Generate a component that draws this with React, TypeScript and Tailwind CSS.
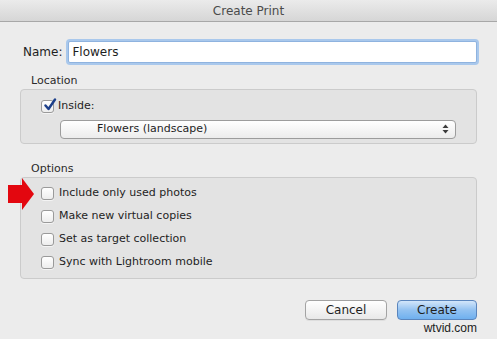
import React from "react";

// Small mac-style checkbox
const Check = ({ checked = false }: { checked?: boolean }) => (
    <span className="relative flex h-[13px] w-[13px] shrink-0 items-center justify-center rounded-[3px] border border-[#9a9a9a] bg-gradient-to-b from-white to-[#ededed] shadow-[0_1px_0_rgba(255,255,255,0.6)]">
        {checked && (
            <svg width="14" height="14" viewBox="0 0 14 14" className="absolute -top-[3px] left-[1px]">
                <path d="M2.5 7.5 L5.5 11 L12 1.5" fill="none" stroke="#1c3f8a" strokeWidth="2.4" strokeLinecap="round" strokeLinejoin="round" />
            </svg>
        )}
    </span>
);

const OptionRow = ({ label }: { label: string }) => (
    <label className="flex h-[23px] items-center gap-[5px]">
        <Check />
        <span>{label}</span>
    </label>
);

const App = () => {
    const options = [
        "Include only used photos",
        "Make new virtual copies",
        "Set as target collection",
        "Sync with Lightroom mobile",
    ];

    return (
        <div
            className="flex h-[339px] w-[497px] flex-col overflow-hidden bg-[#ececec] text-[11px] text-[#1e1e1e]"
            style={{ fontFamily: '"DejaVu Sans", sans-serif' }}
        >
            {/* Title bar */}
            <div className="flex h-[22px] shrink-0 items-center justify-center border-b border-[#a8a8a8] bg-gradient-to-b from-[#ebebeb] to-[#d6d6d6] text-[12px] text-[#4b4b4b]">
                Create Print
            </div>

            <div className="flex flex-1 flex-col pl-[20px] pr-[20px]">
                {/* Name */}
                <div className="mt-[19px] flex items-center">
                    <span className="ml-[3px] mr-[6px] text-[12px]">Name:</span>
                    <div className="flex h-[22px] flex-1 items-center rounded-[2px] border border-[#8fb3df] bg-white px-[3px] text-[12px] shadow-[0_0_0_2px_#a9c8ec]">
                        Flowers
                    </div>
                </div>

                {/* Location */}
                <div className="mt-[10px] ml-[11px] h-[16px] text-[11px] leading-[16px] text-[#2a2a2a]">Location</div>
                <div className="h-[55px] rounded-[4px] border border-[#cbcbcb] bg-[#e3e3e3] pl-[20px] pr-[20px] pt-[8px]">
                    <label className="flex items-center gap-[4px]">
                        <Check checked />
                        <span>Inside:</span>
                    </label>
                    <div className="mt-[5px] ml-[19px] flex h-[19px] items-center justify-between rounded-[4px] border border-[#9c9c9c] bg-gradient-to-b from-white to-[#ececec] pl-[36px] pr-[6px] text-[11px]">
                        <span>Flowers (landscape)</span>
                        <svg width="7" height="10" viewBox="0 0 7 10">
                            <path d="M3.5 0.5 L6.5 4 L0.5 4 Z" fill="#3c3c3c" />
                            <path d="M3.5 9.5 L6.5 6 L0.5 6 Z" fill="#3c3c3c" />
                        </svg>
                    </div>
                </div>

                {/* Options */}
                <div className="mt-[17px] ml-[11px] h-[16px] text-[11px] leading-[16px] text-[#2a2a2a]">Options</div>
                <div className="relative h-[102px] rounded-[4px] border border-[#cbcbcb] bg-[#e3e3e3] pl-[20px] pt-[4px]">
                    {/* red pointer arrow */}
                    <svg width="27" height="32" viewBox="0 0 27 32" className="absolute -left-[13px] top-[0px]">
                        <path d="M0 7 L14 7 L14 0 L26 16 L14 32 L14 25 L0 25 Z" fill="#e3070f" />
                    </svg>
                    {options.map((o) => (
                        <OptionRow key={o} label={o} />
                    ))}
                </div>

                {/* Buttons */}
                <div className="mt-[21px] flex justify-end gap-[10px]">
                    <button className="h-[20px] w-[82px] rounded-[4px] border border-[#a3a3a3] bg-gradient-to-b from-white to-[#e8e8e8] text-[12px] leading-none text-[#1e1e1e] shadow-[0_1px_0_rgba(0,0,0,0.06)]">
                        Cancel
                    </button>
                    <button className="h-[20px] w-[80px] rounded-[4px] border border-[#5a85bd] bg-gradient-to-b from-[#d3e6fa] via-[#93c2f1] to-[#6fb0ef] text-[12px] leading-none text-[#1e1e1e]">
                        Create
                    </button>
                </div>
                <div className="mt-[1px] self-end text-[12px] leading-[14px] text-[#222]" style={{ fontFamily: '"Liberation Sans", sans-serif' }}>
                    wtvid.com
                </div>
            </div>
        </div>
    );
};

export default App;
